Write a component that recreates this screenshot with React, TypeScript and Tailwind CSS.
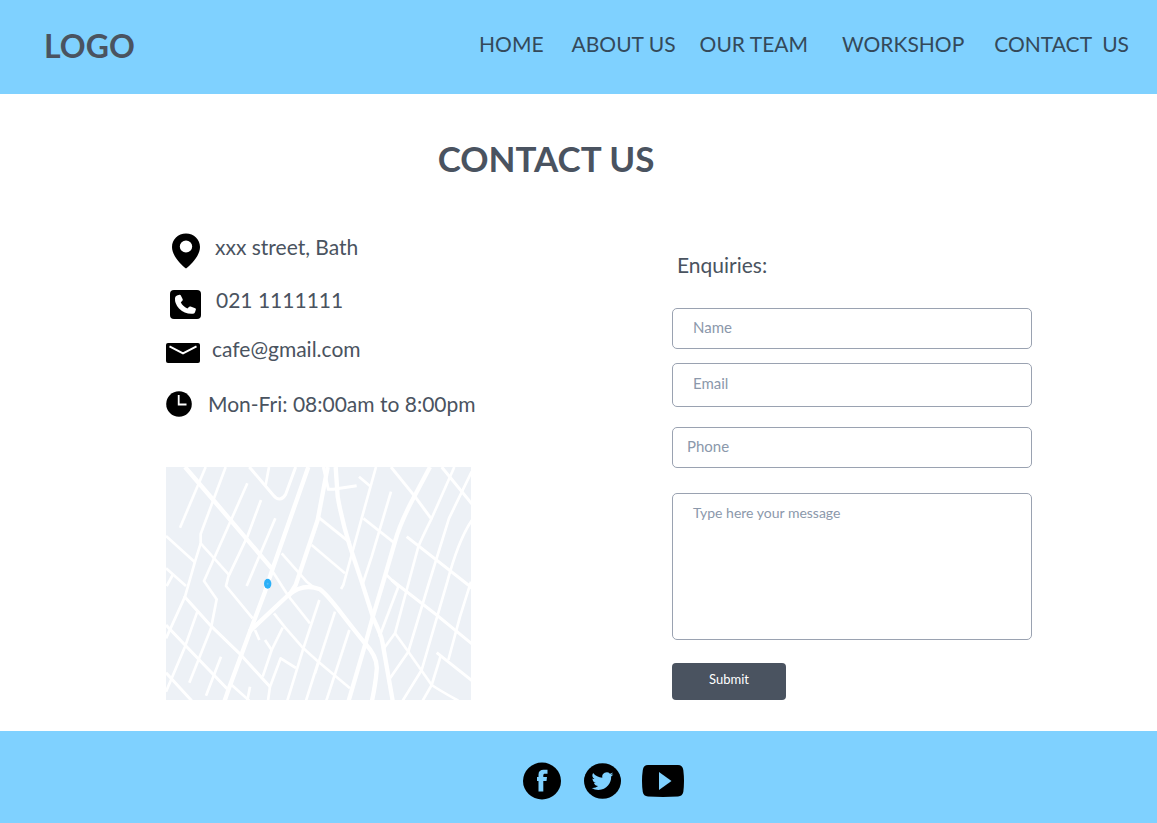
import React from "react";

const navItems = [
  { label: "HOME", space: "" },
  { label: "ABOUT US", space: "ml-7" },
  { label: "OUR TEAM", space: "ml-6" },
  { label: "WORKSHOP", space: "ml-[34px]" },
  { label: "CONTACT  US", space: "ml-[30px]" },
];

function PinIcon() {
  return (
    <svg className="h-9 w-7 shrink-0" viewBox="0 0 28 36" aria-hidden="true">
      <path
        fillRule="evenodd"
        d="M14 .5C6 .5 0 6.500 0 14c0 8 8 17 14 21.500C20 31 28 22 28 14 28 6.500 22 .5 14 .5ZM14 7.500a6.200 6 0 1 1 0 12 6.200 6 0 0 1 0-12Z"
      />
    </svg>
  );
}

function PhoneIcon() {
  return (
    <svg className="h-[29px] w-[31px] shrink-0" viewBox="0 0 31 29" aria-hidden="true">
      <rect width="31" height="29" rx="4" />
      <path
        fill="#fff"
        d="M7 5.500 9.500 4.800q.8-.2 1.200.5l2 4q.3.800-.3 1.400l-1.600 1.600q1.800 4 6.600 6.300l1.800-1.800q.6-.5 1.400-.2l4.600 1.700q.9.400.7 1.300l-.8 2.500q-.4 1.500-2 1.700Q15 24.500 9 18.500 4.500 13.500 5 8q.2-1.800 2-2.500Z"
      />
    </svg>
  );
}

function MailIcon() {
  return (
    <svg className="h-5 w-[34px] shrink-0" viewBox="0 0 34 20" aria-hidden="true">
      <rect width="34" height="20" rx="2" />
      <path d="M3.500 3.300 17 10.300 30.500 3.300" fill="none" stroke="#fff" strokeWidth="2" />
    </svg>
  );
}

function ClockIcon() {
  return (
    <svg className="h-[26px] w-[26px] shrink-0" viewBox="0 0 26 26" aria-hidden="true">
      <circle cx="13" cy="13" r="12.800" />
      <path d="M12.700 4v9.500h7.800" fill="none" stroke="#fff" strokeWidth="1.800" />
    </svg>
  );
}

const contacts = [
  { icon: <PinIcon />, text: "xxx street, Bath", row: "pl-[6px] gap-[15px]", lift: "pb-2" },
  { icon: <PhoneIcon />, text: "021 1111111", row: "mt-[13px] pl-1 gap-[15px]", lift: "pb-2" },
  { icon: <MailIcon />, text: "cafe@gmail.com", row: "mt-[9px] gap-3", lift: "pb-2" },
  { icon: <ClockIcon />, text: "Mon-Fri: 08:00am to 8:00pm", row: "mt-[11px] gap-4", lift: "" },
];

const streets = [
  "M137 21 60 203",
  "M197 21 160 120 122 222V250L209 347",
  "M262 70 160 300 132 363 170 418 153 505 88 668",
  "M303 120 262 230 205 350 198 378 278 475",
  "M346 175 260 378",
  "M327 21 317 75",
  "M365 280 440 365 465 385",
  "M335 330 385 408 450 490",
  "M455 255 555 340",
  "M18 228 105 307",
  "M122 250 105 305 75 410 18 535",
  "M18 325 78 378",
  "M38 345 20 378",
  "M112 455 75 560 18 695",
  "M183 590 138 707",
  "M215 675 268 722",
  "M270 680 262 722",
  "M285 510 298 540",
  "M315 540 335 570",
  "M368 503 335 570 308 650",
  "M342 460 375 502 430 565 475 605 570 685",
  "M478 420 430 565 382 722",
  "M324 722 330 680 362 595 408 624",
  "M475 605 438 722",
  "M525 455 465 640",
  "M568 510 499 722",
  "M597 50 630 78",
  "M648 21 605 175 550 375 543 387",
  "M693 95 635 290 607 375",
  "M610 175 702 248",
  "M883 21 815 175Q785 235 775 260L748 360 705 520 672 565",
  "M705 520 745 575 815 675Q845 695 895 722",
  "M935 35 867 175 805 375 745 575 690 655",
  "M936 180Q895 240 862 365L785 630 728 722",
  "M933 365 900 470 865 600",
  "M842 588 815 675 788 722",
  "M715 380 658 530",
  "M680 345 715 380",
];

const avenues = [
  "M268 21 340 106Q360 130 377 103L407 21",
  "M72 408 155 500 238 580 330 680",
  "M18 495 80 560 202 687",
  "M18 638 95 722",
  "M490 21 505 88H520L590 77",
  "M473 170 570 248",
  "M693 21 765 110 813 175",
  "M830 578 936 662",
  "M695 360 830 465 936 552",
  "M740 230 925 375 936 385",
  "M845 21 936 132",
];

const mainRoads = [
  "M75 21 160 120 335 325",
  "M445 21 340 320 315 395 268 520 205 690 194 722",
  "M503 21 473 180 407 375 385 410",
  "M268 515 385 405Q430 368 480 388C510 410 530 445 615 550Q654 592 650 630 647 670 636 722",
  "M810 21 760 115Q720 190 705 245L670 365 640 465 615 555 566 722",
  "M527 21 533 110Q545 180 570 260L605 365 640 475Q664 525 667 545L698 722",
];

function StreetMap() {
  return (
    <svg
      className="mt-[43px] block w-full bg-[#edf1f6]"
      viewBox="18 21 915 699"
      role="img"
      aria-label="Street map"
    >
      <g fill="none" stroke="#fff" strokeLinejoin="round">
        <g strokeWidth="8">{streets.map((d) => <path key={d} d={d} />)}</g>
        <g strokeWidth="9">{avenues.map((d) => <path key={d} d={d} />)}</g>
        <g strokeWidth="13">{mainRoads.map((d) => <path key={d} d={d} />)}</g>
      </g>
      <ellipse cx="323" cy="371" rx="11" ry="15" fill="#2bb0f8" />
      <circle cx="323" cy="371" r="3" fill="#58bdf5" />
    </svg>
  );
}

const field =
  "block w-full rounded-[5px] border border-[#9aa2b1] bg-white leading-5 text-[#4a5360] placeholder:text-[#8b98ab] placeholder:opacity-100 outline-none focus:border-[#4a5360]";

export default function App() {
  return (
    <div className="flex min-h-screen flex-col bg-white font-['Lato',sans-serif] text-[#4a5360]">
      <header className="flex h-[94px] items-center justify-between bg-[#7fd1ff] pl-11 pr-7">
        <a href="#" className="pb-[2px] text-[32px] font-bold leading-10">LOGO</a>
        <nav className="flex pb-[6px] text-[21px] leading-7 text-[#34495a]">
          {navItems.map((item) => (
            <a key={item.label} href="#" className={`whitespace-pre ${item.space}`}>
              {item.label}
            </a>
          ))}
        </nav>
      </header>

      <main className="flex-1 pb-[31px] pl-[166px] pr-[125px] pt-[41px]">
        <h1 className="pr-[106px] text-center text-[35px] font-bold leading-[46px]">CONTACT US</h1>
        <div className="mt-[50px] grid grid-cols-[minmax(0,305fr)_minmax(0,360fr)] gap-x-[201px]">
          <section>
            <ul className="whitespace-nowrap text-[21px] leading-7">
              {contacts.map((c) => (
                <li key={c.text} className={`flex h-10 items-center ${c.row}`}>
                  {c.icon}
                  <span className={c.lift}>{c.text}</span>
                </li>
              ))}
            </ul>
            <StreetMap />
          </section>

          <form className="pt-5" onSubmit={(e) => e.preventDefault()}>
            <h2 className="pl-[5px] text-[21px] leading-7">Enquiries:</h2>
            <input aria-label="Name" placeholder="Name" className={`${field} mt-[29px] h-[41px] px-5 pb-1 text-[15px]`} />
            <input aria-label="Email" placeholder="Email" className={`${field} mt-[14px] h-[44px] px-5 pb-1 text-[15px]`} />
            <input aria-label="Phone" type="tel" placeholder="Phone" className={`${field} mt-[20px] h-[41px] px-[14px] pb-1 text-[15px]`} />
            <textarea
              aria-label="Message"
              placeholder="Type here your message"
              className={`${field} mt-[25px] h-[147px] resize-none px-5 pt-[9px] text-[14px]`}
            />
            <button type="submit" className="mt-[23px] block h-[37px] w-[114px] rounded bg-[#4a5360] pb-[6px] text-[13px] leading-5 text-white">
              Submit
            </button>
          </form>
        </div>
      </main>

      <footer className="flex h-[92px] items-center justify-center bg-[#7fd1ff] pb-1 pl-[50px] pt-[11px]">
        <a href="#" aria-label="Facebook">
          <svg className="block h-[38px] w-[38px]" viewBox="0 0 38 38" aria-hidden="true">
            <ellipse cx="19" cy="19" rx="19" ry="18.500" />
            <path
              fill="#7fd1ff"
              d="M15.500 29.500V19H14v-4h1.500v-2.500c0-3.200 2-4.700 5-4.700h4v4h-2.300c-1.500 0-1.900.6-1.900 1.800V15H24l-.5 4h-3.200v10.500Z"
            />
          </svg>
        </a>
        <a href="#" aria-label="Twitter" className="ml-[23px]">
          <svg className="block h-9 w-[37px]" viewBox="0 0 37 36" aria-hidden="true">
            <ellipse cx="18.500" cy="18" rx="18.500" ry="17.800" />
            <path
              fill="#7fd1ff"
              transform="translate(6.700 6.500) scale(.96)"
              d="M23.600 4.900a9 9 0 0 1-2.600.8 4.700 4.700 0 0 0 2-2.600 9 9 0 0 1-2.900 1.200 4.700 4.700 0 0 0-8 4.200A13.200 13.200 0 0 1 2.500 3.700a4.700 4.700 0 0 0 1.400 6.200 4.600 4.600 0 0 1-2.100-.6c0 2.300 1.500 4.200 3.700 4.700a4.700 4.700 0 0 1-2.100.1 4.700 4.700 0 0 0 4.400 3.200A9.500 9.500 0 0 1 1 19.200 13.300 13.300 0 0 0 8.100 21.300c8.600 0 13.500-7.300 13.200-13.900a9.500 9.500 0 0 0 2.300-2.500Z"
            />
          </svg>
        </a>
        <a href="#" aria-label="YouTube" className="ml-[21px]">
          <svg className="block h-8 w-[42px]" viewBox="0 0 42 32" aria-hidden="true">
            <path d="M6 0h30q4.500 0 5.300 5 1.400 11 0 22-.8 4-5.300 4.500-15 .8-30 0Q1.500 31 .8 27q-1.600-11 0-22Q1.500 0 6 0Z" />
            <path fill="#7fd1ff" d="m17 7 12.500 9L17 25Z" />
          </svg>
        </a>
      </footer>
    </div>
  );
}
